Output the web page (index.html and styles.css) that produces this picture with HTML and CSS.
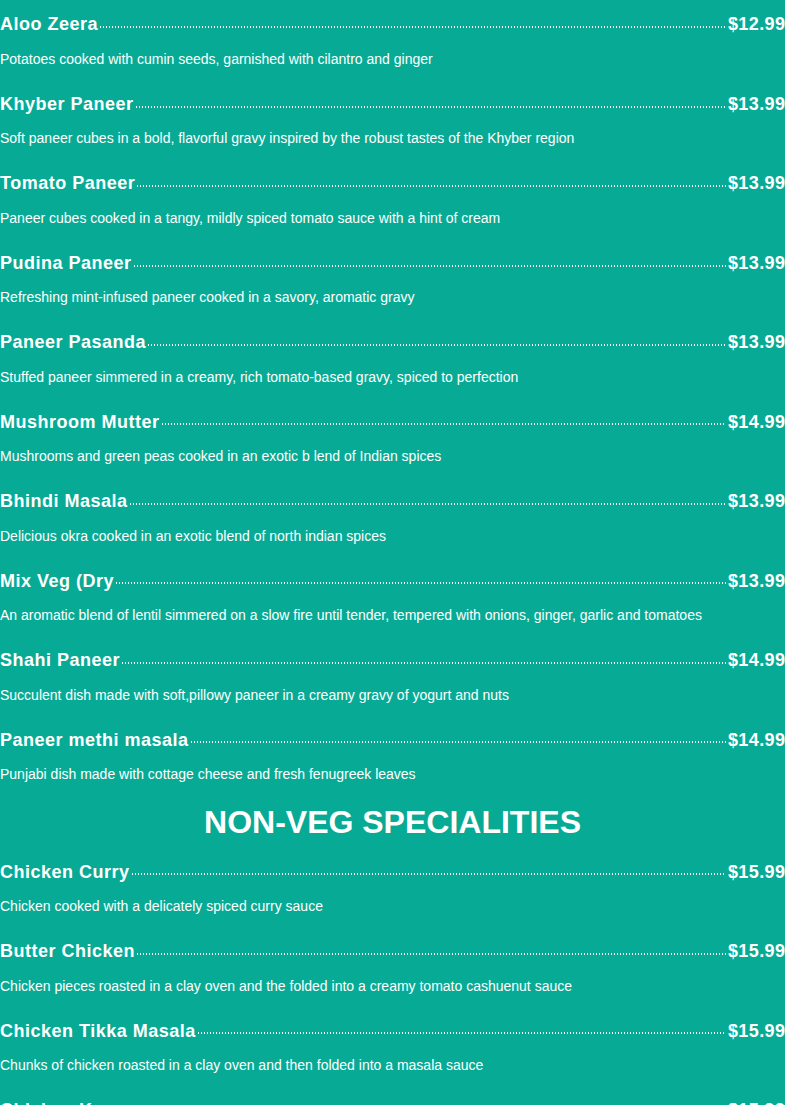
FILE: index.html
```html
<!DOCTYPE html>
<html>
<head>
<meta charset="utf-8">
<link rel="stylesheet" href="styles.css">
</head>
<body>
<div class="menu">
  <div class="item"><div class="row"><span class="name">Aloo Zeera</span><span class="leader"></span><span class="price">$12.99</span></div><p class="desc">Potatoes cooked with cumin seeds, garnished with cilantro and ginger</p></div>
  <div class="item"><div class="row"><span class="name">Khyber Paneer</span><span class="leader"></span><span class="price">$13.99</span></div><p class="desc">Soft paneer cubes in a bold, flavorful gravy inspired by the robust tastes of the Khyber region</p></div>
  <div class="item"><div class="row"><span class="name">Tomato Paneer</span><span class="leader"></span><span class="price">$13.99</span></div><p class="desc">Paneer cubes cooked in a tangy, mildly spiced tomato sauce with a hint of cream</p></div>
  <div class="item"><div class="row"><span class="name">Pudina Paneer</span><span class="leader"></span><span class="price">$13.99</span></div><p class="desc">Refreshing mint-infused paneer cooked in a savory, aromatic gravy</p></div>
  <div class="item"><div class="row"><span class="name">Paneer Pasanda</span><span class="leader"></span><span class="price">$13.99</span></div><p class="desc">Stuffed paneer simmered in a creamy, rich tomato-based gravy, spiced to perfection</p></div>
  <div class="item"><div class="row"><span class="name">Mushroom Mutter</span><span class="leader"></span><span class="price">$14.99</span></div><p class="desc">Mushrooms and green peas cooked in an exotic b lend of Indian spices</p></div>
  <div class="item"><div class="row"><span class="name">Bhindi Masala</span><span class="leader"></span><span class="price">$13.99</span></div><p class="desc">Delicious okra cooked in an exotic blend of north indian spices</p></div>
  <div class="item"><div class="row"><span class="name">Mix Veg (Dry</span><span class="leader"></span><span class="price">$13.99</span></div><p class="desc">An aromatic blend of lentil simmered on a slow fire until tender, tempered with onions, ginger, garlic and tomatoes</p></div>
  <div class="item"><div class="row"><span class="name">Shahi Paneer</span><span class="leader"></span><span class="price">$14.99</span></div><p class="desc">Succulent dish made with soft,pillowy paneer in a creamy gravy of yogurt and nuts</p></div>
  <div class="item"><div class="row"><span class="name">Paneer methi masala</span><span class="leader"></span><span class="price">$14.99</span></div><p class="desc">Punjabi dish made with cottage cheese and fresh fenugreek leaves</p></div>
  <h2 class="section">NON-VEG SPECIALITIES</h2>
  <div class="item"><div class="row"><span class="name">Chicken Curry</span><span class="leader"></span><span class="price">$15.99</span></div><p class="desc">Chicken cooked with a delicately spiced curry sauce</p></div>
  <div class="item"><div class="row"><span class="name">Butter Chicken</span><span class="leader"></span><span class="price">$15.99</span></div><p class="desc">Chicken pieces roasted in a clay oven and the folded into a creamy tomato cashuenut sauce</p></div>
  <div class="item"><div class="row"><span class="name">Chicken Tikka Masala</span><span class="leader"></span><span class="price">$15.99</span></div><p class="desc">Chunks of chicken roasted in a clay oven and then folded into a masala sauce</p></div>
  <div class="item"><div class="row"><span class="name">Chicken Korma</span><span class="leader"></span><span class="price">$15.99</span></div><p class="desc">Chicken cooked in a rich and creamy cashew nut sauce</p></div>
</div>
</body>
</html>
```

FILE: styles.css
```css
html, body {
  margin: 0;
  padding: 0;
  background: #07ab95;
}
body {
  font-family: "Liberation Sans", Arial, sans-serif;
  color: #ffffff;
}
.menu {
  display: flex;
  flex-direction: column;
}
.item {
  padding: 14.25px 0 10.5px;
}
.row {
  display: flex;
  align-items: center;
  height: 21.6px;
}
.name, .price {
  font-size: 18px;
  font-weight: bold;
  letter-spacing: 0.5px;
  line-height: 21.6px;
  white-space: nowrap;
}
.price {
  letter-spacing: 0.4px;
  margin-right: -0.4px;
}
.leader {
  flex: 1;
  height: 2px;
  margin: 4px 2px 0 2px;
  background-image: linear-gradient(to right, #ffffff 1px, transparent 1px);
  background-size: 3px 2px;
  background-repeat: repeat-x;
}
.desc {
  margin: 13.15px 0 0;
  font-size: 14px;
  line-height: 20px;
}
.section {
  margin: 8.3px 0 5.75px;
  font-size: 32px;
  line-height: 38.4px;
  font-weight: bold;
  text-align: center;
}
```
